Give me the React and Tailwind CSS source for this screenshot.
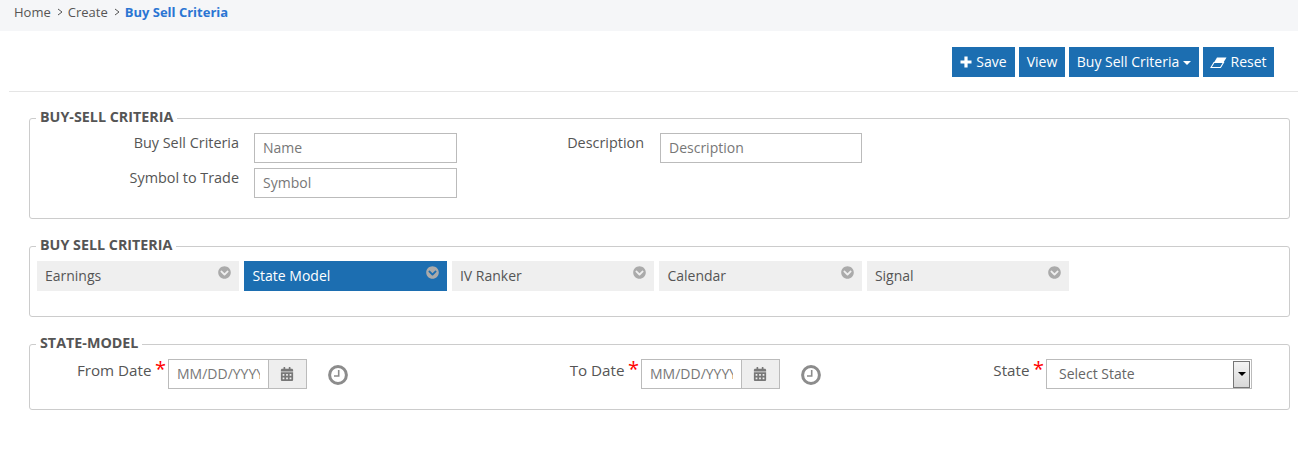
import React from "react";
import { FaChevronCircleDown, FaCalendarAlt } from "react-icons/fa";

const tabs = ["Earnings", "State Model", "IV Ranker", "Calendar", "Signal"];

const Plus = () => (
  <svg width="12" height="12" viewBox="0 0 12 12" className="shrink-0">
    <path d="M4.4 0.5 H7.6 V4.4 H11.5 V7.6 H7.6 V11.5 H4.4 V7.6 H0.5 V4.4 H4.4 Z" fill="#fff" />
  </svg>
);

const Eraser = () => (
  <svg width="17" height="13" viewBox="0 0 17 13" className="shrink-0">
    <path d="M1 11.5 L4 6.5 H13.5 L10.5 11.5 Z" fill="none" stroke="#fff" strokeWidth="1.1" />
    <path d="M4 6.5 L7 1.5 H16.5 L13.5 6.5 Z" fill="#fff" />
  </svg>
);

const Clock = () => (
  <svg width="20" height="20" viewBox="0 0 20 20" className="shrink-0">
    <circle cx="10" cy="10" r="8.4" fill="none" stroke="#8c8c8c" strokeWidth="3" />
    <path d="M10.7 5 V11 H6" fill="none" stroke="#8c8c8c" strokeWidth="1.6" />
  </svg>
);

const Crumb = () => (
  <svg width="6" height="8" viewBox="0 0 6 8" className="shrink-0">
    <path d="M1 1 L5 4 L1 7" fill="none" stroke="#555" strokeWidth="1" />
  </svg>
);

const Star = () => <span className="ml-[3.5px] -mr-[1px] text-[20px] leading-[14px] text-[#f00] relative top-[2px]">*</span>;

const Section = ({ title, className, children }) => (
  <fieldset className={`mx-[29px] w-[1261px] border border-[#ccc] rounded-[3px] ${className}`}>
    <legend className="relative -top-[1px] ml-[6px] px-1 text-[14.3px] font-bold leading-[20px] text-[#555]">{title}</legend>
    {children}
  </fieldset>
);

const DateField = ({ label, labelWidth, className }) => (
  <div className={`flex ${className}`}>
    <label className={`flex items-start justify-end text-[15.2px] leading-[20px] pt-[1px] text-[#555] ${labelWidth}`}>
      {label}
      <Star />
    </label>
    <div className="ml-[3px] flex h-[30px] w-[139px]">
      <input
        placeholder="MM/DD/YYYY"
        className="h-full w-[101px] border border-[#bbb] px-2 pb-[2px] text-sm text-[#555] placeholder:text-[#777] outline-none"
      />
      <span className="flex h-full w-[38px] items-center justify-center border border-l-0 border-[#bbb] bg-[#eee]">
        <FaCalendarAlt className="mr-[2px] text-[14px] text-[#777]" />
      </span>
    </div>
  </div>
);

export default function App() {
  return (
    <div className="min-h-[469px] bg-white font-['Open_Sans',sans-serif] text-sm text-[#555] overflow-hidden">
      {/* Breadcrumb */}
      <div className="flex h-[31px] items-center bg-[#f5f6f8] pl-[14px] pb-[7px] text-[13px]">
        <span>Home</span>
        <span className="ml-[6px] mr-[5px]"><Crumb /></span>
        <span>Create</span>
        <span className="ml-[6px] mr-[5px]"><Crumb /></span>
        <span className="font-bold text-[#2a75d3]">Buy Sell Criteria</span>
      </div>

      {/* Actions */}
      <div className="ml-[9px] flex h-[61px] justify-end gap-1 border-b border-[#e5e5e5] pt-[16px] pr-[24px]">
        <button className="flex h-[30px] w-[63px] items-center justify-center gap-[4px] bg-[#1c6eb1] text-sm text-white">
          <Plus /> Save
        </button>
        <button className="h-[30px] w-[46px] bg-[#1c6eb1] text-sm text-white">View</button>
        <button className="flex h-[30px] w-[130px] items-center justify-center gap-[4px] bg-[#1c6eb1] text-sm text-white">
          Buy Sell Criteria
          <span className="mt-[2px] border-x-[4px] border-t-[4px] border-x-transparent border-t-white" />
        </button>
        <button className="flex h-[30px] w-[71px] items-center justify-center gap-[3px] bg-[#1c6eb1] text-sm text-white">
          <Eraser /> Reset
        </button>
      </div>

      {/* Name and description */}
      <Section title="BUY-SELL CRITERIA" className="mt-[16px] h-[111px]">
        <div className="flex pt-[5px]">
          <div className="flex w-[209px] flex-col items-end gap-[13px] -mt-[1px] text-[14.4px] leading-[22px] text-[#555]">
            <label>Buy Sell Criteria</label>
            <label>Symbol to Trade</label>
          </div>
          <div className="ml-[15px] flex w-[203px] flex-col gap-[5px]">
            <input placeholder="Name" className="h-[30px] w-full border border-[#bbb] pl-2 pb-[2px] text-sm placeholder:text-[#777] outline-none" />
            <input placeholder="Symbol" className="h-[30px] w-full border border-[#bbb] pl-2 pb-[2px] text-sm placeholder:text-[#777] outline-none" />
          </div>
          <label className="ml-[110px] -mt-[1px] w-[77px] whitespace-nowrap text-right text-[14.4px] leading-[22px] text-[#555]">Description</label>
          <input placeholder="Description" className="ml-[16px] h-[30px] w-[202px] border border-[#bbb] pl-2 pb-[2px] text-sm placeholder:text-[#777] outline-none" />
        </div>
      </Section>

      {/* Criteria tabs */}
      <Section title="BUY SELL CRITERIA" className="mt-[17px] h-[81px]">
        <div className="flex gap-[5px] pt-[5px] pl-[6.9px]">
          {tabs.map((tab) => (
            <div
              key={tab}
              className={`relative flex h-[30px] w-[202.5px] items-center pl-2 text-sm ${
                tab === "State Model" ? "bg-[#1c6eb1] text-white" : "bg-[#efefef] text-[#555]"
              }`}
            >
              {tab}
              <FaChevronCircleDown className="absolute right-[8px] top-[5px] text-[13px] text-[#aaa]" />
            </div>
          ))}
        </div>
      </Section>

      {/* State model */}
      <Section title="STATE-MODEL" className="mt-[17px] h-[76px]">
        <div className="flex pt-[5px]">
          <DateField label="From Date" labelWidth="w-[135px]" />
          <span className="ml-[21px] mt-[6px]"><Clock /></span>
          <DateField label="To Date" labelWidth="w-[80px]" className="ml-[210px]" />
          <span className="ml-[21px] mt-[6px]"><Clock /></span>
          <label className="ml-[170px] flex w-[52px] items-start justify-end pt-[1px] text-[15.2px] leading-[20px] text-[#555]">
            State
            <Star />
          </label>
          <div className="ml-[3px] flex h-[30px] w-[206px] items-center justify-between border border-[#bbb] pl-3 pr-[1px] text-sm text-[#666]">
            Select State
            <span className="flex h-[27px] w-[17px] items-center justify-center border border-[#767676] bg-gradient-to-b from-[#f4f4f4] to-[#d8d8d8]">
              <span className="border-x-[4px] border-t-[4px] border-x-transparent border-t-black" />
            </span>
          </div>
        </div>
      </Section>
    </div>
  );
}
